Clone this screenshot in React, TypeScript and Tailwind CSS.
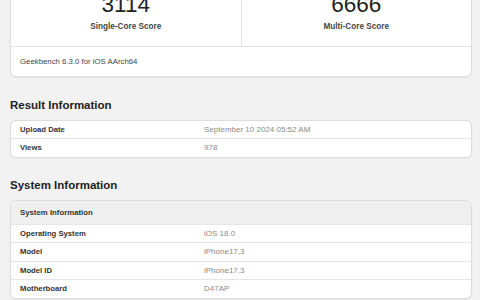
import React from "react";

const font = { fontFamily: '"Liberation Sans", Arial, Helvetica, sans-serif' };

type Row = { label: string; value: string };

const resultRows: Row[] = [
    { label: "Upload Date", value: "September 10 2024 05:52 AM" },
    { label: "Views", value: "978" },
];

const systemRows: Row[] = [
    { label: "Operating System", value: "iOS 18.0" },
    { label: "Model", value: "iPhone17,3" },
    { label: "Model ID", value: "iPhone17,3" },
    { label: "Motherboard", value: "D47AP" },
];

function ScoreCell({ score, label, last }: { score: string; label: string; last?: boolean }) {
    return (
        <div className={`flex-1 flex flex-col items-center pt-[14px] pb-[14px] ${last ? "" : "border-r border-[#e3e3e3]"}`}>
            <div className="text-[22.5px] leading-[22px] text-[#222]">{score}</div>
            <div className="mt-[6px] text-[8.2px] leading-[10px] font-bold text-[#444]">{label}</div>
        </div>
    );
}

function InfoTable({ rows, header }: { rows: Row[]; header?: string }) {
    return (
        <div className="bg-white border border-[#dcdcdc] rounded-[6px] overflow-hidden shadow-[0_1px_2px_rgba(0,0,0,0.04)]">
            {header && (
                <div className="h-[23.3px] flex items-center px-[9px] bg-[#efefef] text-[7.8px] font-bold text-[#333]">
                    {header}
                </div>
            )}
            {rows.map((r, i) => (
                <div
                    key={r.label}
                    className={`box-content h-[17.4px] flex items-center ${i > 0 || header ? "border-t border-[#e6e6e6]" : ""}`}
                >
                    <div className="w-[40%] pl-[9px] text-[7.7px] font-bold text-[#333]">{r.label}</div>
                    <div className="flex-1 pl-[9px] text-[8px] text-[#8a8a8a]">{r.value}</div>
                </div>
            ))}
        </div>
    );
}

export default function App() {
    return (
        <div className="w-[480px] h-[300px] overflow-hidden bg-[#f2f2f2]" style={font}>
            <div className="pl-[10px] pr-[8px]">
                {/* Score card, top is scrolled out of view */}
                <div className="-mt-[21px] bg-white border border-[#dcdcdc] rounded-[6px] shadow-[0_1px_2px_rgba(0,0,0,0.05)]">
                    <div className="flex border-b border-[#e3e3e3]">
                        <ScoreCell score="3114" label="Single-Core Score" />
                        <ScoreCell score="6666" label="Multi-Core Score" last />
                    </div>
                    <div className="h-[29px] flex items-center px-[9px] text-[7.8px] text-[#444]">
                        Geekbench 6.3.0 for iOS AArch64
                    </div>
                </div>

                <h2 className="mt-[21px] mb-[8px] text-[11.5px] leading-[14px] font-bold text-[#222]">
                    Result Information
                </h2>
                <InfoTable rows={resultRows} />

                <h2 className="mt-[20px] mb-[8px] text-[11.5px] leading-[14px] font-bold text-[#222]">
                    System Information
                </h2>
                <InfoTable rows={systemRows} header="System Information" />
            </div>
        </div>
    );
}
